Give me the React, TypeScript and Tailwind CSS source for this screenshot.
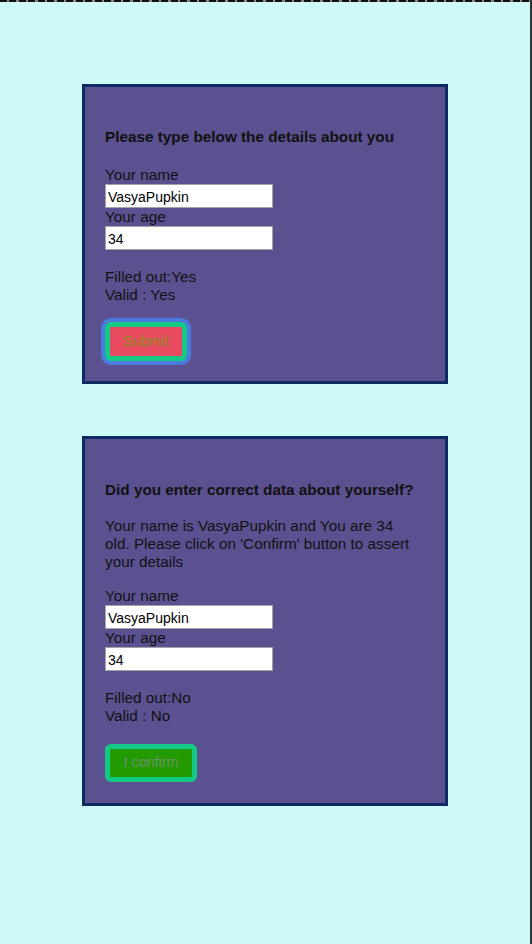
import React from "react";

const font = { fontFamily: '"Liberation Sans", Arial, Helvetica, sans-serif' };

function Field({ label, value }: { label: string; value: string }) {
  return (
    <div className="flex flex-col">
      <div className="text-[15.3px] leading-[18px] text-[#111]">{label}</div>
      <input
        readOnly
        value={value}
        className="w-[168px] h-[24px] bg-white border border-[#a3a3a3] pl-[2px] pt-[2px] text-[14px] text-black outline-none"
        style={font}
      />
    </div>
  );
}

export default function App() {
  return (
    <div
      className="relative w-[532px] h-[944px] bg-[#cff9f7] border-r-2 border-[#2d3333] overflow-hidden"
      style={font}
    >
      <div className="absolute top-0 left-0 w-full h-[2px] bg-[repeating-linear-gradient(90deg,#111_0px,#111_7px,#8a8a8a_7px,#8a8a8a_9.5px)]" />
      <div className="flex flex-col items-center pt-[84px]">
        {/* Panel 1 */}
        <div className="w-[366px] h-[300px] bg-[#5b5190] border-[3px] border-[#0f2b63] pt-[41px] pl-[20px] pr-[23px] text-[#111]">
          <div className="text-[15.3px] leading-[18px] font-bold">Please type below the details about you</div>
          <div className="mt-[20px]">
            <Field label="Your name" value="VasyaPupkin" />
            <Field label="Your age" value="34" />
          </div>
          <div className="mt-[18px] text-[15.3px] leading-[18px]">
            <div>Filled out:Yes</div>
            <div>Valid : Yes</div>
          </div>
          <button
            className="mt-[18px] w-[82px] h-[39px] rounded-[6px] border-[5px] border-[#14c986] bg-[#e84b5f] text-[14.6px] text-[#8c8b1e] shadow-[0_0_1px_4px_#4a7de0] flex items-center justify-center"
            style={font}
          >
            Submit
          </button>
        </div>

        {/* Panel 2 */}
        <div className="mt-[52px] w-[366px] h-[370px] bg-[#5b5190] border-[3px] border-[#0f2b63] pt-[42px] pl-[20px] pr-[23px] text-[#111]">
          <div className="text-[15.3px] leading-[18px] font-bold">Did you enter correct data about yourself?</div>
          <div className="mt-[18px] text-[15.3px] leading-[18px]">
            Your name is VasyaPupkin and You are 34 old. Please click on 'Confirm' button to assert your details
          </div>
          <div className="mt-[16px]">
            <Field label="Your name" value="VasyaPupkin" />
            <Field label="Your age" value="34" />
          </div>
          <div className="mt-[18px] text-[15.3px] leading-[18px]">
            <div>Filled out:No</div>
            <div>Valid : No</div>
          </div>
          <button
            className="mt-[19px] w-[92px] h-[38px] rounded-[6px] border-[5px] border-[#14c986] bg-[#229b00] text-[14.3px] text-[#6f8e6c] flex items-center justify-center"
            style={font}
          >
            I confirm
          </button>
        </div>
      </div>
    </div>
  );
}
